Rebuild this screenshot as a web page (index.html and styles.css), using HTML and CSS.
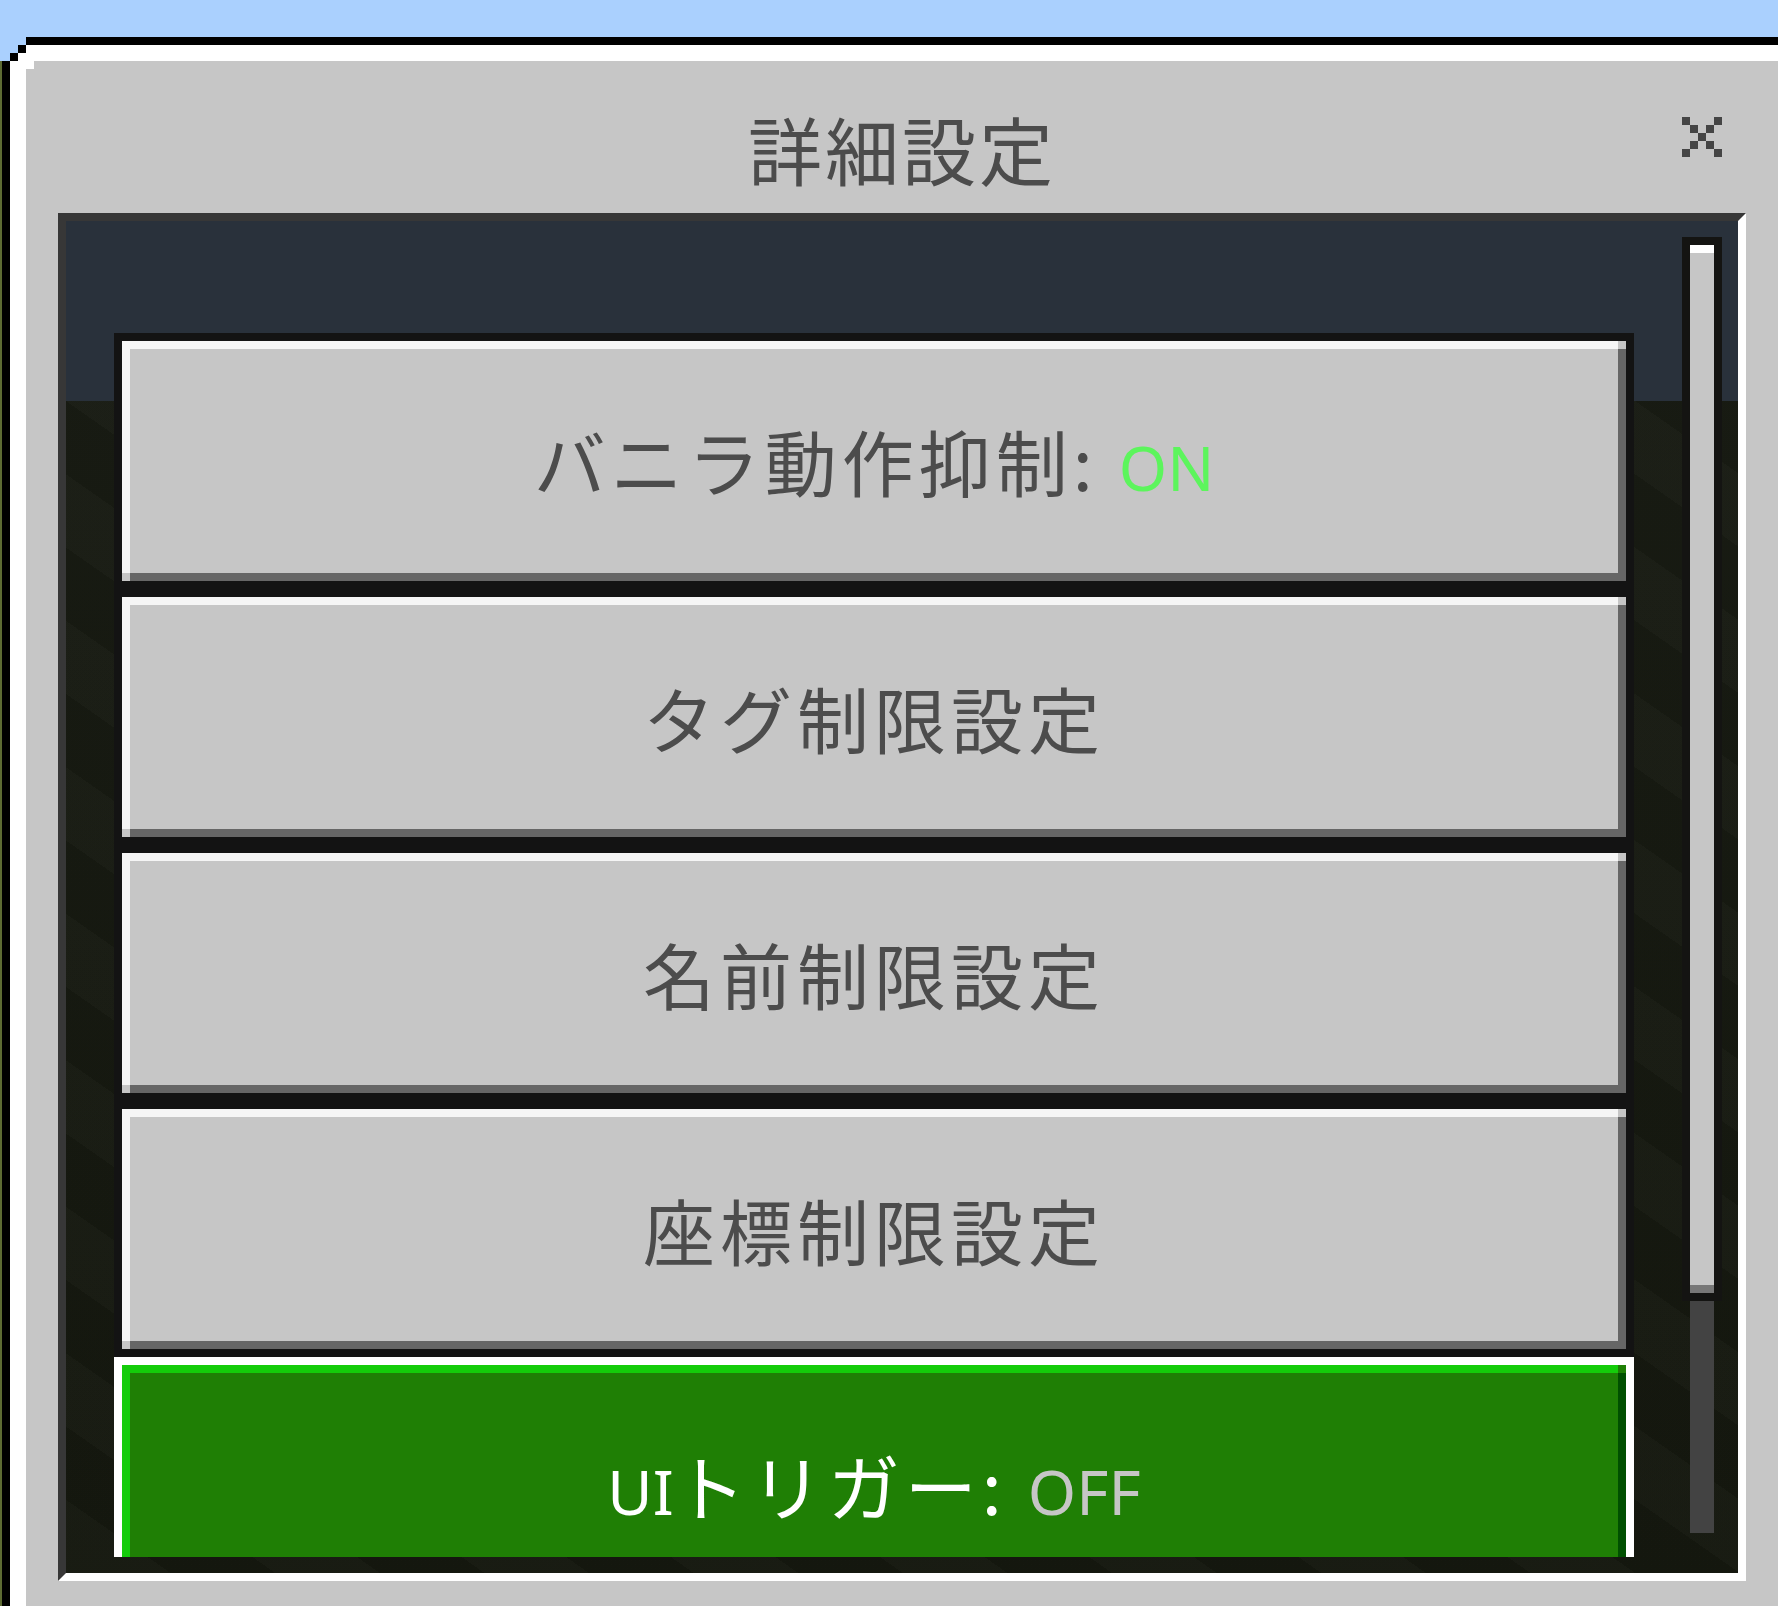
FILE: index.html
```html
<!DOCTYPE html>
<html lang="ja">
<head>
    <meta charset="UTF-8">
    <title>詳細設定</title>
    <link rel="stylesheet" href="styles.css">
</head>
<body>
    <div class="window">
        <div class="window-body">
            <header class="title-bar">
                <h1 class="title">詳細設定</h1>
                <button class="close" aria-label="閉じる">
                    <svg width="40" height="40" viewBox="0 0 5 5" shape-rendering="crispEdges">
                        <rect x="0" y="0" width="1" height="1"/><rect x="4" y="0" width="1" height="1"/>
                        <rect x="1" y="1" width="1" height="1"/><rect x="3" y="1" width="1" height="1"/>
                        <rect x="2" y="2" width="1" height="1"/>
                        <rect x="1" y="3" width="1" height="1"/><rect x="3" y="3" width="1" height="1"/>
                        <rect x="0" y="4" width="1" height="1"/><rect x="4" y="4" width="1" height="1"/>
                    </svg>
                </button>
            </header>

            <section class="panel">
                <div class="list">
                    <div class="btn">
                        <div class="btn-face"><span class="label">バニラ動作抑制: <span class="latin val-on">ON</span></span></div>
                    </div>
                    <div class="btn">
                        <div class="btn-face"><span class="label">タグ制限設定</span></div>
                    </div>
                    <div class="btn">
                        <div class="btn-face"><span class="label">名前制限設定</span></div>
                    </div>
                    <div class="btn">
                        <div class="btn-face"><span class="label">座標制限設定</span></div>
                    </div>
                    <div class="btn btn-active">
                        <div class="btn-face"><span class="label"><span class="latin">UI</span>トリガー: <span class="latin val-off">OFF</span></span></div>
                    </div>
                </div>
                <div class="scrollbar">
                    <div class="track">
                        <div class="thumb"></div>
                    </div>
                </div>
            </section>
        </div>
    </div>
</body>
</html>
```

FILE: styles.css
```css
html, body {
    margin: 0;
    height: 100%;
    overflow: hidden;
}
body {
    font-family: "Noto Sans CJK JP", "Noto Sans", sans-serif;
    background: linear-gradient(#aad0fe 0 61px, #5d6b33 61px);
}
.window {
    margin: 37px 0 0 2px;
    height: 1600px;
    border-top: 8px solid #000;
    border-left: 8px solid #000;
    position: relative;
}
/* stepped top-left corner */
.window::before {
    content: "";
    position: absolute;
    top: -8px;
    left: -8px;
    width: 8px;
    height: 8px;
    background: #aad0fe;
    box-shadow: 8px 0 #aad0fe, 16px 0 #aad0fe, 0 8px #aad0fe, 8px 8px #aad0fe,
        0 16px #aad0fe, 16px 8px #000, 8px 16px #000, 24px 24px #fff;
}
.window-body {
    height: 100%;
    padding: 0 32px;
    background: #c6c6c6;
    border-top: 16px solid #fff;
    border-left: 16px solid #fff;
}
.title-bar {
    height: 152px;
    box-sizing: border-box;
    padding-top: 22px;
    display: flex;
    align-items: center;
    justify-content: center;
    position: relative;
}
.title {
    margin: 0;
    font-size: 74px;
    font-weight: 400;
    line-height: 1;
    letter-spacing: 3px;
    color: #4c4c4c;
}
.close {
    position: absolute;
    top: 56px;
    right: 24px;
    padding: 0;
    border: 0;
    background: none;
    fill: #454545;
    line-height: 0;
}
.panel {
    height: 1320px;
    display: flex;
    padding: 16px 16px 16px 48px;
    border: 8px solid;
    border-color: #373737 #fff #fff #373737;
    background:
        linear-gradient(#29313b, #29313b) top / 100% 180px no-repeat,
        repeating-linear-gradient(35deg, rgba(255, 255, 255, 0.015) 0 60px, rgba(0, 0, 0, 0.04) 60px 120px),
        linear-gradient(#191c14, #15180f);
}
.list {
    width: 1520px;
    padding-top: 96px;
    overflow: hidden;
    display: flex;
    flex-direction: column;
}
.btn {
    --hi: #f5f5f5;
    --lo: #666;
    --face: #c6c6c6;
    flex-shrink: 0;
    height: 256px;
    box-sizing: border-box;
    border: 8px solid #131313;
    color: #4c4c4c;
}
.btn-active {
    --hi: #14cc0a;
    --lo: #004f00;
    --face: #1f7f05;
    border-color: #fff;
    color: #fff;
}
.btn-face {
    height: 100%;
    display: flex;
    align-items: center;
    justify-content: center;
    background:
        linear-gradient(var(--hi), var(--hi)) left top / calc(100% - 8px) 8px no-repeat,
        linear-gradient(var(--hi), var(--hi)) left top / 8px calc(100% - 8px) no-repeat,
        linear-gradient(var(--lo), var(--lo)) right bottom / calc(100% - 8px) 8px no-repeat,
        linear-gradient(var(--lo), var(--lo)) right bottom / 8px calc(100% - 8px) no-repeat,
        var(--face);
}
.label {
    font-size: 72px;
    line-height: 1;
    letter-spacing: 5px;
    white-space: nowrap;
}
.latin {
    font-family: "Noto Sans", sans-serif;
    font-size: 62px;
    letter-spacing: 0;
}
.val-on {
    color: #5cf55c;
}
.val-off {
    color: #c6c6c6;
}
.scrollbar {
    width: 40px;
    margin-left: 48px;
    box-sizing: border-box;
    padding: 8px 8px 16px;
}
.track {
    height: 100%;
    background: #434343;
}
.thumb {
    margin: -8px;
    height: 1064px;
    box-sizing: border-box;
    border: 8px solid #141412;
    background: linear-gradient(#fff 0 8px, #c6c6c6 8px calc(100% - 8px), #777 calc(100% - 8px));
}
```
